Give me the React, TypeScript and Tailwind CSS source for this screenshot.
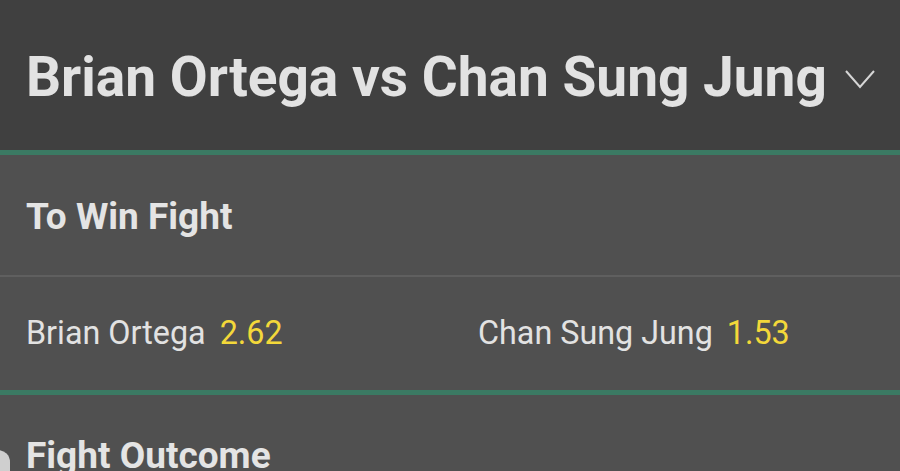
const font = { fontFamily: 'Roboto, "Liberation Sans", sans-serif' };

function Selection({ name, price, first }: { name: string; price: string; first?: boolean }) {
  return (
    <div className={first ? 'flex items-center gap-[14px] pl-[26px]' : 'flex items-center gap-[14px] pl-[28px]'}>
      <span className="text-[32.3px] text-[#e2e2e2]">{name}</span>
      <span className="text-[32.3px] text-[#f3d83a]">{price}</span>
    </div>
  );
}

export default function App() {
  return (
    <div
      className="relative w-[900px] h-[471px] overflow-hidden bg-[#505050]"
      style={font}
    >
      {/* Event header */}
      <div className="h-[150px] bg-[#404040] flex items-center pl-[26px] pr-6 gap-[18px] pt-[5px]">
        <h1 className="text-[55px] font-bold text-[#e2e2e2] leading-none">
          Brian Ortega vs Chan Sung Jung
        </h1>
        <svg width="30" height="19" viewBox="0 0 30 19" fill="none" className="mt-[4px]">
          <polyline points="1,1 15,17 29,1" stroke="#d6d6d6" strokeWidth="2" />
        </svg>
      </div>
      <div className="h-[5px] bg-[#3b7a63]" />

      {/* To Win Fight market */}
      <div className="h-[122px] flex items-center pl-[26px] pt-[3px] border-b-2 border-[#5f5f5f]">
        <h2 className="text-[37px] font-bold text-[#e4e4e4] leading-none">To Win Fight</h2>
      </div>
      <div className="h-[113px] grid grid-cols-2 items-center">
        <Selection name="Brian Ortega" price="2.62" first />
        <Selection name="Chan Sung Jung" price="1.53" />
      </div>
      <div className="h-[5px] bg-[#3b7a63]" />

      {/* Fight Outcome market */}
      <div className="pt-[42px] pl-[26px]">
        <h2 className="text-[37px] font-bold text-[#e4e4e4] leading-none">Fight Outcome</h2>
      </div>

      <div className="absolute left-[-14px] top-[450px] w-6 h-10 rounded-xl bg-[#cfcfcf]" />
    </div>
  );
}
